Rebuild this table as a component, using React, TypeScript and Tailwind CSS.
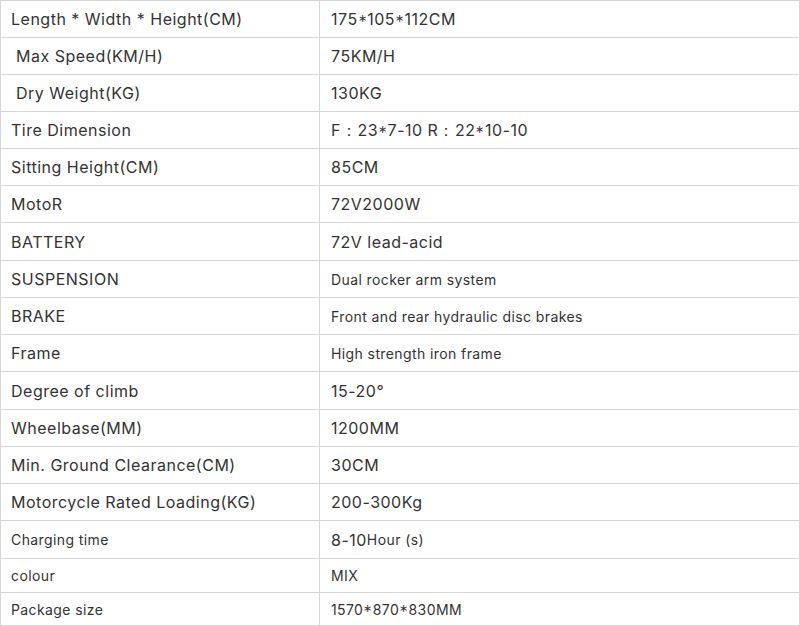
const Star = () => <span className="relative top-[-1px] text-[11px]">∗</span>;

const rows: { label: string; value: React.ReactNode; h: string; small?: boolean; smallValue?: boolean }[] = [
  {
    label: "Length * Width * Height(CM)",
    value: (
      <>
        175<Star />105<Star />112CM
      </>
    ),
    h: "h-[37px]",
  },
  { label: " Max Speed(KM/H)", value: "75KM/H", h: "h-[37px]" },
  { label: " Dry Weight(KG)", value: "130KG", h: "h-[37px]" },
  {
    label: "Tire Dimension",
    value: (
      <>
        F：23<Star />7-10 R：22<Star />10-10
      </>
    ),
    h: "h-[37px]",
  },
  { label: "Sitting Height(CM)", value: "85CM", h: "h-[37px]" },
  { label: "MotoR", value: "72V2000W", h: "h-[37px]" },
  { label: "BATTERY", value: "72V lead-acid", h: "h-[38px]" },
  { label: "SUSPENSION", value: "Dual rocker arm system", h: "h-[37px]", smallValue: true },
  { label: "BRAKE", value: "Front and rear hydraulic disc brakes", h: "h-[37px]", smallValue: true },
  { label: "Frame", value: "High strength iron frame", h: "h-[37px]", smallValue: true },
  { label: "Degree of climb", value: "15-20°", h: "h-[38px]" },
  { label: "Wheelbase(MM)", value: "1200MM", h: "h-[37px]" },
  { label: "Min. Ground Clearance(CM)", value: "30CM", h: "h-[37px]" },
  { label: "Motorcycle Rated Loading(KG)", value: "200-300Kg", h: "h-[37px]" },
  {
    label: "Charging time",
    value: (
      <>
        8-10<span className="text-[14px] tracking-[0.4px]">Hour (s)</span>
      </>
    ),
    h: "h-[38px]",
    small: true,
  },
  { label: "colour", value: "MIX", h: "h-[34px]", small: true, smallValue: true },
  {
    label: "Package size",
    value: (
      <>
        1570<Star />870<Star />830MM
      </>
    ),
    h: "h-[33px]",
    small: true,
    smallValue: true,
  },
];

export default function App() {
  return (
    <div className="h-[626px] w-[800px] bg-white font-['Inter','Liberation_Sans',sans-serif] text-[#333]">
      <div className="border-t border-l border-[#d6d6d6]">
        {rows.map((r, i) => (
          <div key={i} className={`flex ${r.h} border-b border-[#d6d6d6]`}>
            <div
              className={`flex w-[319px] items-center border-r border-[#d6d6d6] pl-[10px] whitespace-pre ${
                r.small ? "text-[14px] tracking-[0.4px]" : "text-[16px] tracking-[0.5px]"
              }`}
            >
              {r.label}
            </div>
            <div
              className={`flex flex-1 items-center border-r border-[#d6d6d6] pl-[11px] whitespace-pre ${
                r.smallValue ? "text-[14px] tracking-[0.4px]" : "text-[16px] tracking-[0.5px]"
              }`}
            >
              {r.value}
            </div>
          </div>
        ))}
      </div>
    </div>
  );
}
